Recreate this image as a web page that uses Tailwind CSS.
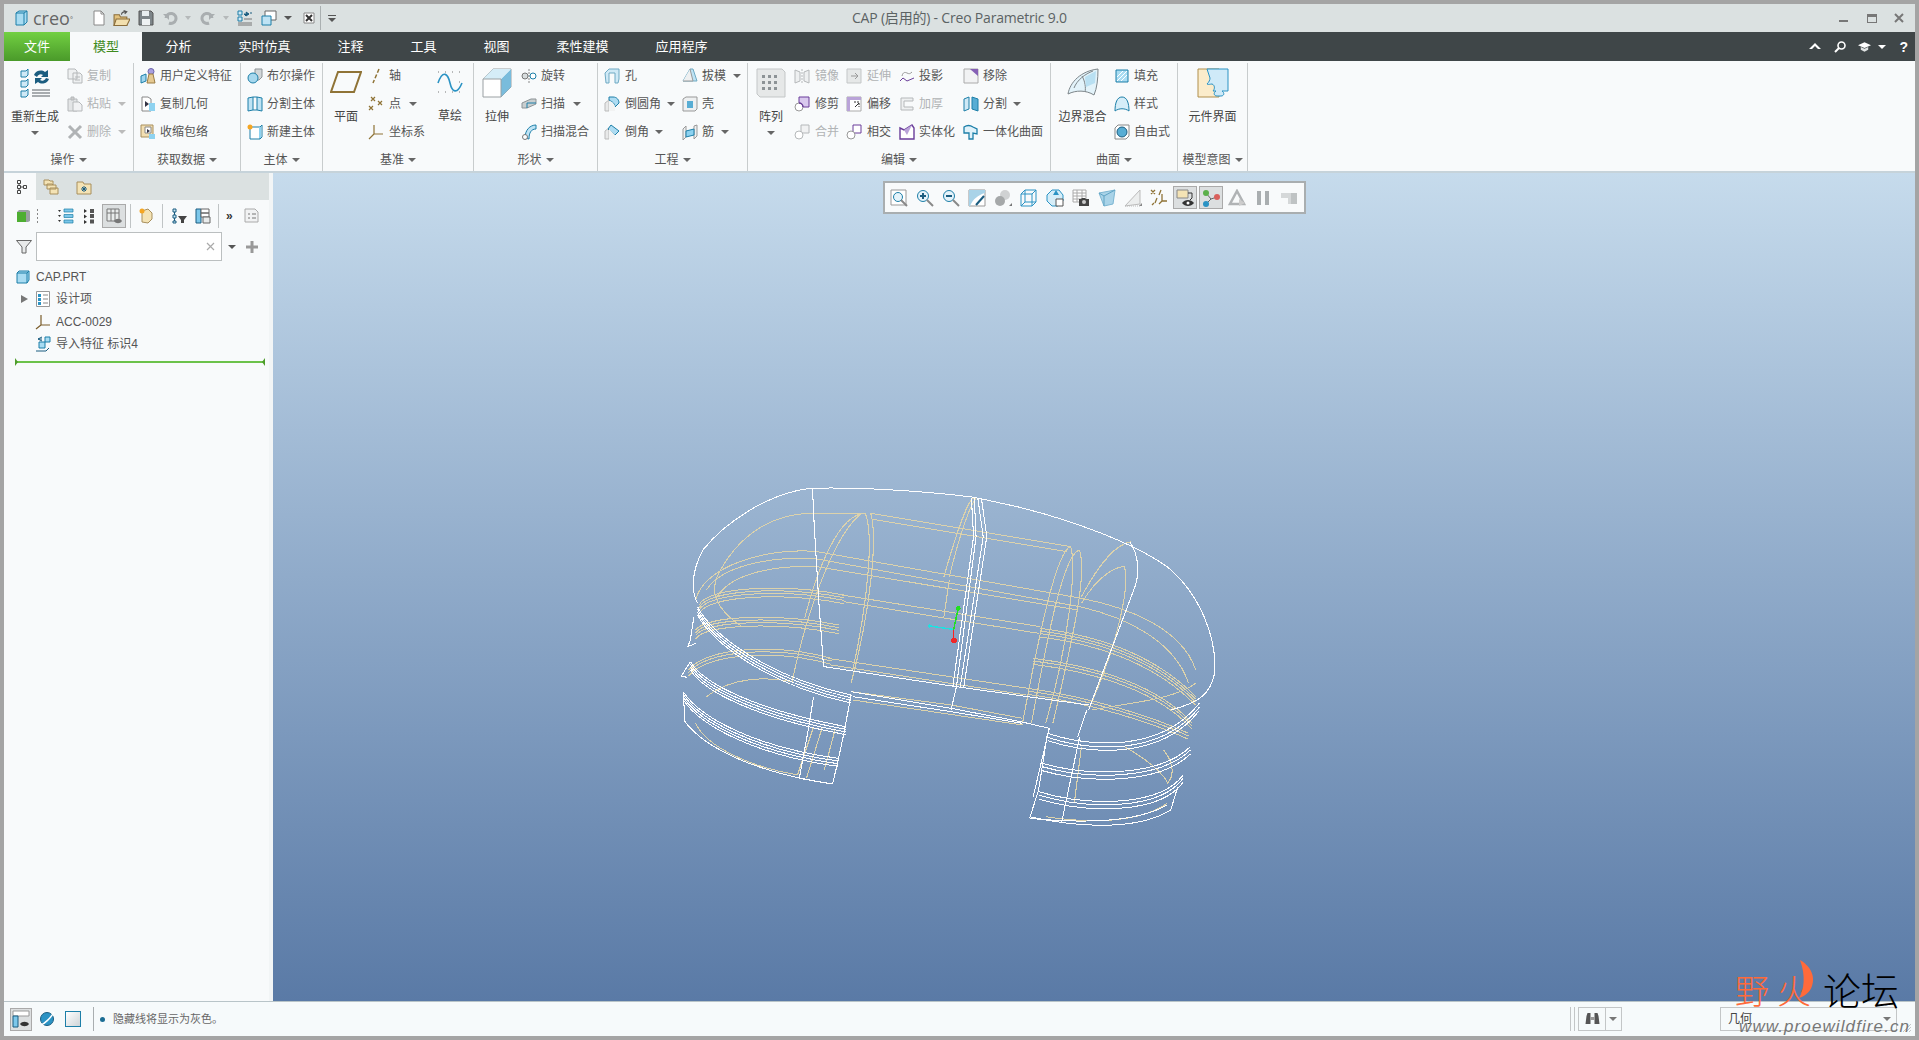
<!DOCTYPE html>
<html lang="zh-CN">
<head>
<meta charset="UTF-8" />
<title>CAP (启用的) - Creo Parametric 9.0</title>
<script src="https://cdn.jsdelivr.net/npm/@tailwindcss/browser@4"></script>
</head>
<body class="w-[1919px] h-[1040px] overflow-hidden bg-[#a4a4a4] p-1 text-xs text-[#555] font-['Liberation_Sans','Noto_Sans_CJK_SC',sans-serif]">
<div class="relative flex flex-col h-full">

  <!-- title bar -->
  <div class="flex items-center h-7 shrink-0 bg-[#dbe1e1]">
    <svg viewBox="0 0 16 16" class="w-[16px] h-[16px] ml-[9px]"><path d="M3 3l3-2h8v11l-3 3H3z" fill="#a9dcf2" stroke="#1d7fa8"/><path d="M11 15V3L14 1M11 3H3" fill="none" stroke="#1d7fa8"/></svg>
    <span class="ml-[4px] w-[50px] text-[18px] leading-none text-[#666] font-['Open_Sans']">creo<sup class="text-[7px]">°</sup></span>
    <svg viewBox="0 0 16 16" class="w-[16px] h-[18px] ml-[8px]"><path d="M3 1h7l3 3v11H3z" fill="#fff" stroke="#888"/><path d="M10 1v3h3" fill="none" stroke="#888"/></svg>
    <svg viewBox="0 0 16 16" class="w-[17px] h-[18px] ml-[6px]"><path d="M1 5h5l1 2h6v8H1z" fill="#e3c27e" stroke="#8a6d3b"/><path d="M3 9h13l-3 6H1z" fill="#f2dfae" stroke="#8a6d3b"/><path d="M8 5c0-2 2-3 4-3M10 1l3 1-2 2" fill="none" stroke="#555"/></svg>
    <svg viewBox="0 0 16 16" class="w-[16px] h-[16px] ml-[8px]"><path d="M1 1h12l2 2v12H1z" fill="#7d8589" stroke="#555"/><path d="M4 1h7v5H4z" fill="#e8eef0"/><path d="M4 9h8v6H4z" fill="#eef2f3"/></svg>
    <svg viewBox="0 0 16 16" class="w-[16px] h-[16px] ml-[8px]"><path d="M4 8a5 5 0 1 1 3 5" fill="none" stroke="#a9aeb0" stroke-width="3"/><path d="M1 4h6v6z" fill="#a9aeb0"/></svg>
    <span class="ml-[7px] w-0 h-0 border-x-[3px] border-x-transparent border-t-[4px] border-t-[#b5b9ba]"></span>
    <svg viewBox="0 0 16 16" class="w-[16px] h-[16px] ml-[9px]"><path d="M12 8a5 5 0 1 0-3 5" fill="none" stroke="#a9aeb0" stroke-width="3"/><path d="M15 4H9v6z" fill="#a9aeb0"/></svg>
    <span class="ml-[7px] w-0 h-0 border-x-[3px] border-x-transparent border-t-[4px] border-t-[#b5b9ba]"></span>
    <svg viewBox="0 0 16 16" class="w-[16px] h-[16px] ml-[8px]"><path d="M1 1h4v4H1zM1 7h4v4H1z" fill="#cfe9f6" stroke="#1d7fa8"/><path d="M7 9h8M1 13h14M1 15h14" stroke="#777"/><path d="M7 4h3l-1-2 3 2-3 2zM15 3h-2" fill="#1b5d80" stroke="#1b5d80"/></svg>
    <svg viewBox="0 0 16 16" class="w-[16px] h-[16px] ml-[8px]"><path d="M4 1h11v9H4z" fill="#fff" stroke="#666"/><path d="M1 6h9v9H1z" fill="#bfe3f4" stroke="#1d7fa8"/></svg>
    <span class="ml-[7px] w-0 h-0 border-x-[4px] border-x-transparent border-t-[4px] border-t-[#555]"></span>
    <svg viewBox="0 0 12 12" class="w-[12px] h-[12px] ml-[11px]"><path d="M1 1h10v10H1z" fill="#fff" stroke="#888"/><path d="M3 3l6 6M9 3l-6 6" stroke="#333" stroke-width="2"/></svg>
    <span class="ml-[5px] w-px h-[24px] bg-[#aab0b1]"></span>
    <span class="ml-[7px] flex flex-col items-center gap-[2px]"><span class="w-[8px] h-px bg-[#555]"></span><span class="w-0 h-0 border-x-[4px] border-x-transparent border-t-[4px] border-t-[#555]"></span></span>
    <span class="ml-[516px] text-[14px] text-[#5c6364] font-['Open_Sans','Noto_Sans_CJK_SC',sans-serif] tracking-[-0.2px] whitespace-nowrap">CAP (启用的) - Creo Parametric 9.0</span>
    <div class="ml-auto flex items-center mr-[11px]">
      <span class="w-[9px] h-[2px] mt-[5px] bg-[#777] mr-[19px]"></span>
      <span class="w-[10px] h-[9px] border border-t-[3px] border-[#777] mr-[17px]"></span>
      <svg viewBox="0 0 10 10" class="w-[10px] h-[10px]"><path d="M1 1l8 8M9 1l-8 8" stroke="#777" stroke-width="2"/></svg>
    </div>
  </div>

  <!-- tabs -->
  <div class="flex items-center h-[29px] shrink-0 bg-[#3f4648] text-[13px] text-white">
    <div class="flex items-center justify-center w-[66px] h-full bg-linear-to-b from-[#72d042] to-[#4a9a2a]">文件</div>
    <div class="flex items-center justify-center w-[72px] h-full bg-[#f8fafb] text-[#3f8b1e]">模型</div>
    <div class="px-[23.5px]">分析</div>
    <div class="px-[23.5px]">实时仿真</div>
    <div class="px-[23.5px]">注释</div>
    <div class="px-[23.5px]">工具</div>
    <div class="px-[23.5px]">视图</div>
    <div class="px-[23.5px]">柔性建模</div>
    <div class="px-[23.5px]">应用程序</div>
    <div class="ml-auto flex items-center mr-[7px]">
      <svg viewBox="0 0 12 8" class="w-[12px] h-[8px] mr-[13px] mb-[2px]"><path d="M0 7l6-6 6 6H9L6 4 3 7z" fill="#fff"/></svg>
      <svg viewBox="0 0 12 12" class="w-[12px] h-[12px] mr-[12px]"><circle cx="7.5" cy="4.5" r="3.5" fill="none" stroke="#fff" stroke-width="1.6"/><path d="M5 7l-4 4" stroke="#fff" stroke-width="2"/></svg>
      <svg viewBox="0 0 14 12" class="w-[13px] h-[12px] mr-[7px]"><path d="M7 1l7 3-7 3-7-3z" fill="#fff"/><path d="M3 6v3l4 2 4-2V6L7 8z" fill="#dfe3e3"/></svg>
      <span class="w-0 h-0 border-x-[4px] border-x-transparent border-t-[4px] border-t-white mr-[13px]"></span>
      <span class="text-[14px] font-bold leading-none font-['Liberation_Sans']">?</span>
    </div>
  </div>

  <!-- ribbon -->
  <div class="flex h-[112px] shrink-0 bg-[#f8fafb] border-b-2 border-[#c6d3da]">

    <!-- 操作 -->
    <div class="flex flex-col w-[129px] pt-px">
      <div class="flex h-[86px] pl-[7px]">
        <div class="flex flex-col items-center w-[48px]">
          <svg viewBox="0 0 30 30" class="w-[30px] h-[30px] mt-[6px]"><path d="M1 3h5l2-2v6l-2 2H1zM1 13h5l2-2v6l-2 2H1zM1 23h5l2-2v6l-2 2H1z" fill="#cfe9f6" stroke="#1d7fa8"/><path d="M12 22h18M12 25h18M12 28h18" stroke="#8d9396" stroke-width="1.5"/><path d="M14 7a7 7 0 0 1 11-3l3-2v7h-7l2-2a4 4 0 0 0-6 2zM29 11a7 7 0 0 1-11 3l-3 2V10h7l-2 2a4 4 0 0 0 6-2z" fill="#1b5d80"/></svg>
          <span class="mt-[11px] leading-4 text-[#444]">重新生成</span>
          <span class="mt-[6px] w-0 h-0 border-x-[4px] border-x-transparent border-t-[4px] border-t-[#666]"></span>
        </div>
        <div class="flex flex-col ml-[8px]">
          <div class="flex items-center h-7 gap-[4px] text-[#b0b3b5]">
            <svg viewBox="0 0 16 16" class="w-4 h-4"><path d="M1 1h7l2 2v8H1zM6 5h7l2 2v8H6z" fill="#eef0f1" stroke="#b5b8ba"/><path d="M8 9h5M8 12h5" stroke="#b5b8ba"/></svg>复制
          </div>
          <div class="flex items-center h-7 gap-[4px] text-[#b0b3b5]">
            <svg viewBox="0 0 16 16" class="w-4 h-4"><path d="M1 3h9v12H1z" fill="#e3e5e6" stroke="#b5b8ba"/><path d="M4 1h3v3H4z" fill="#ccc" stroke="#b5b8ba"/><path d="M6 6h6l3 3v6H6z" fill="#f1f2f3" stroke="#b5b8ba"/></svg>粘贴
            <span class="ml-[3px] w-0 h-0 border-x-[4px] border-x-transparent border-t-[4px] border-t-[#bbb]"></span>
          </div>
          <div class="flex items-center h-7 gap-[4px] text-[#b0b3b5]">
            <svg viewBox="0 0 16 16" class="w-4 h-4"><path d="M2 2l12 12M14 2L2 14" stroke="#b0b3b5" stroke-width="3"/></svg>删除
            <span class="ml-[3px] w-0 h-0 border-x-[4px] border-x-transparent border-t-[4px] border-t-[#bbb]"></span>
          </div>
        </div>
      </div>
      <div class="flex items-center justify-center gap-[4px] h-[23px]">操作<span class="w-0 h-0 border-x-[4px] border-x-transparent border-t-[4px] border-t-[#666]"></span></div>
    </div>
    <div class="w-px h-[108px] mt-[2px] bg-[#c8cccd]"></div>

    <!-- 获取数据 -->
    <div class="flex flex-col w-[106px] pt-px">
      <div class="flex flex-col h-[86px] pl-[6px]">
        <div class="flex items-center h-7 gap-[4px] whitespace-nowrap">
          <svg viewBox="0 0 16 16" class="w-4 h-4"><path d="M1 8l5-2v7l-5 2z" fill="#9fd5ee" stroke="#1d7fa8"/><circle cx="11" cy="3.5" r="3" fill="#a89fe0" stroke="#6b64a8"/><path d="M9 6h4l2 9H7z" fill="#e5c992" stroke="#9a7c45"/></svg>用户定义特征
        </div>
        <div class="flex items-center h-7 gap-[4px] whitespace-nowrap">
          <svg viewBox="0 0 16 16" class="w-4 h-4"><path d="M2 1h6l3 2v12H2z" fill="#fff" stroke="#888"/><path d="M5 5l4 3-4 3z" fill="#334"/><path d="M9 7h6v8H9z" fill="#8ed2f0"/></svg>复制几何
        </div>
        <div class="flex items-center h-7 gap-[4px] whitespace-nowrap">
          <svg viewBox="0 0 16 16" class="w-4 h-4"><path d="M1 1h12v12H1z" fill="#f3dfb2" stroke="#a88f5d"/><path d="M5 3h6v6H5z" fill="#fff" stroke="#888"/><path d="M7 5l3 2-3 2z" fill="#334"/><path d="M9 10h6v5H9z" fill="#8ed2f0"/></svg>收缩包络
        </div>
      </div>
      <div class="flex items-center justify-center gap-[4px] h-[23px]">获取数据<span class="w-0 h-0 border-x-[4px] border-x-transparent border-t-[4px] border-t-[#666]"></span></div>
    </div>
    <div class="w-px h-[108px] mt-[2px] bg-[#c8cccd]"></div>

    <!-- 主体 -->
    <div class="flex flex-col w-[81px] pt-px">
      <div class="flex flex-col h-[86px] pl-[6px]">
        <div class="flex items-center h-7 gap-[4px] whitespace-nowrap">
          <svg viewBox="0 0 16 16" class="w-4 h-4"><path d="M8 1h7v8l-3 3H8z" fill="#d2d7d9" stroke="#8d9396"/><circle cx="6" cy="10" r="5" fill="#a7d8ee" stroke="#1d7fa8"/></svg>布尔操作
        </div>
        <div class="flex items-center h-7 gap-[4px] whitespace-nowrap">
          <svg viewBox="0 0 16 16" class="w-4 h-4"><path d="M1 2l5-1v13l-5 1zM10 1l5 1v13l-5-1z" fill="#bfe3f4" stroke="#1d7fa8"/><path d="M6 1h4M6 14h4" stroke="#1d7fa8"/></svg>分割主体
        </div>
        <div class="flex items-center h-7 gap-[4px] whitespace-nowrap">
          <svg viewBox="0 0 16 16" class="w-4 h-4"><path d="M3 3h10l2-2v12l-2 2H3z" fill="#fff" stroke="#1d7fa8"/><path d="M13 3v12" stroke="#1d7fa8"/><path d="M12 3h2v11h-2z" fill="#8ed2f0"/><circle cx="3" cy="3" r="2.5" fill="#f5a623"/></svg>新建主体
        </div>
      </div>
      <div class="flex items-center justify-center gap-[4px] h-[23px]">主体<span class="w-0 h-0 border-x-[4px] border-x-transparent border-t-[4px] border-t-[#666]"></span></div>
    </div>
    <div class="w-px h-[108px] mt-[2px] bg-[#c8cccd]"></div>

    <!-- 基准 -->
    <div class="flex flex-col w-[150px] pt-px">
      <div class="flex h-[86px] pl-[7px]">
        <div class="flex flex-col items-center w-[32px]">
          <svg viewBox="0 0 32 22" class="w-[32px] h-[22px] mt-[9px]"><path d="M8 1h23l-7 20H1z" fill="none" stroke="#8f7336" stroke-width="2"/></svg>
          <span class="mt-[16px] leading-4 text-[#444]">平面</span>
        </div>
        <div class="flex flex-col ml-[6px] w-[68px]">
          <div class="flex items-center h-7 gap-[5px]">
            <svg viewBox="0 0 16 16" class="w-4 h-4"><path d="M11 1l-6 14" stroke="#8f7336" stroke-dasharray="4 2" stroke-width="1.5"/></svg>轴
          </div>
          <div class="flex items-center h-7 gap-[5px]">
            <svg viewBox="0 0 16 16" class="w-4 h-4"><path d="M3 1l4 4M7 1L3 5M10 5l4 4M14 5l-4 4M1 10l4 4M5 10l-4 4" stroke="#8f7336" stroke-width="1.2"/></svg>点
            <span class="ml-[3px] w-0 h-0 border-x-[4px] border-x-transparent border-t-[4px] border-t-[#666]"></span>
          </div>
          <div class="flex items-center h-7 gap-[5px] whitespace-nowrap">
            <svg viewBox="0 0 16 16" class="w-4 h-4"><path d="M6 1v9l9 0M6 10l-5 5" fill="none" stroke="#8f7336" stroke-width="1.2"/></svg>坐标系
          </div>
        </div>
        <div class="flex flex-col items-center w-[28px]">
          <svg viewBox="0 0 28 26" class="w-[28px] h-[26px] mt-[7px]"><path d="M2 3h1M9 3h1M16 3h1M23 3h1M2 13h1M23 13h1M2 23h1M9 23h1M16 23h1M23 23h1" stroke="#777"/><path d="M2 14c5-14 10-9 12 0s7 12 12 0" fill="none" stroke="#2b93c4" stroke-width="1.6"/></svg>
          <span class="mt-[13px] leading-4 text-[#444]">草绘</span>
        </div>
      </div>
      <div class="flex items-center justify-center gap-[4px] h-[23px]">基准<span class="w-0 h-0 border-x-[4px] border-x-transparent border-t-[4px] border-t-[#666]"></span></div>
    </div>
    <div class="w-px h-[108px] mt-[2px] bg-[#c8cccd]"></div>

    <!-- 形状 -->
    <div class="flex flex-col w-[123px] pt-px">
      <div class="flex h-[86px] pl-[8px]">
        <div class="flex flex-col items-center w-[30px]">
          <svg viewBox="0 0 30 30" class="w-[30px] h-[30px] mt-[6px]"><path d="M1 11L11 1h18v18L19 29H1z" fill="#fff" stroke="#9aa0a3"/><path d="M19 11L29 1v18L19 29z" fill="#79bcdc"/><path d="M1 11L11 1h18L19 11z" fill="#d5edf8"/><path d="M1 11h18v18" fill="none" stroke="#9aa0a3"/></svg>
          <span class="mt-[11px] leading-4 text-[#444]">拉伸</span>
        </div>
        <div class="flex flex-col ml-[9px]">
          <div class="flex items-center h-7 gap-[4px]">
            <svg viewBox="0 0 16 16" class="w-4 h-4"><path d="M8 1v14" stroke="#888" stroke-dasharray="2 1"/><circle cx="4" cy="8" r="3" fill="#d7dcdd" stroke="#777"/><circle cx="12" cy="8" r="3" fill="#fff" stroke="#1d7fa8"/></svg>旋转
          </div>
          <div class="flex items-center h-7 gap-[4px]">
            <svg viewBox="0 0 16 16" class="w-4 h-4"><path d="M1 7l9-4h5v5l-9 4H1z" fill="#c9cecf" stroke="#8d9396"/><path d="M6 12V7h9" fill="none" stroke="#1d7fa8"/></svg>扫描
            <span class="ml-[4px] w-0 h-0 border-x-[4px] border-x-transparent border-t-[4px] border-t-[#666]"></span>
          </div>
          <div class="flex items-center h-7 gap-[4px] whitespace-nowrap">
            <svg viewBox="0 0 16 16" class="w-4 h-4"><path d="M4 14c0-8 5-13 11-13v4C10 5 8 9 8 15z" fill="#bfe3f4" stroke="#1d7fa8"/><circle cx="4" cy="13" r="2.5" fill="#fff" stroke="#777"/></svg>扫描混合
          </div>
        </div>
      </div>
      <div class="flex items-center justify-center gap-[4px] h-[23px]">形状<span class="w-0 h-0 border-x-[4px] border-x-transparent border-t-[4px] border-t-[#666]"></span></div>
    </div>
    <div class="w-px h-[108px] mt-[2px] bg-[#c8cccd]"></div>

    <!-- 工程 -->
    <div class="flex flex-col w-[149px] pt-px">
      <div class="flex h-[86px] pl-[6px]">
        <div class="flex flex-col w-[78px]">
          <div class="flex items-center h-7 gap-[5px]">
            <svg viewBox="0 0 16 16" class="w-4 h-4"><path d="M1 5l4-4h10v10l-1 4h-3V5H5v10H2z" fill="#cfe9f6" stroke="#6ea9c3"/></svg>孔
          </div>
          <div class="flex items-center h-7 gap-[5px]">
            <svg viewBox="0 0 16 16" class="w-4 h-4"><path d="M1 7l4-3v11H1z" fill="#e8e9e9" stroke="#bbb"/><path d="M5 1h4c4 0 6 3 6 6l-4 4c0-3-2-5-6-7z" fill="#aedcf2" stroke="#1d7fa8"/><path d="M5 5c4 1 6 4 6 6v4H5z" fill="#f2f3f3"/></svg>倒圆角
            <span class="ml-[1px] w-0 h-0 border-x-[4px] border-x-transparent border-t-[4px] border-t-[#666]"></span>
          </div>
          <div class="flex items-center h-7 gap-[5px]">
            <svg viewBox="0 0 16 16" class="w-4 h-4"><path d="M1 7l4-3v11H1z" fill="#e8e9e9" stroke="#bbb"/><path d="M7 1l8 6-4 4-7-6z" fill="#aedcf2" stroke="#1d7fa8"/><path d="M5 5l6 6v4H5z" fill="#f2f3f3"/></svg>倒角
            <span class="ml-[1px] w-0 h-0 border-x-[4px] border-x-transparent border-t-[4px] border-t-[#666]"></span>
          </div>
        </div>
        <div class="flex flex-col">
          <div class="flex items-center h-7 gap-[4px]">
            <svg viewBox="0 0 16 16" class="w-4 h-4"><path d="M1 13L8 1h3l4 12z" fill="#bfe3f4" stroke="#6ea9c3"/><path d="M8 1l3 12H1" fill="#eef0f1" stroke="#999"/></svg>拔模
            <span class="ml-[3px] w-0 h-0 border-x-[4px] border-x-transparent border-t-[4px] border-t-[#666]"></span>
          </div>
          <div class="flex items-center h-7 gap-[4px]">
            <svg viewBox="0 0 16 16" class="w-4 h-4"><path d="M1 3l3-2h11v12l-2 2H1z" fill="#eef0f1" stroke="#999"/><path d="M5 5h6v7H5z" fill="#58add4"/></svg>壳
          </div>
          <div class="flex items-center h-7 gap-[4px]">
            <svg viewBox="0 0 16 16" class="w-4 h-4"><path d="M1 5l3-3v11l-3 3zM12 2l3-1v11l-3 3z" fill="#eef0f1" stroke="#999"/><path d="M4 7l8-2v6l-8 2z" fill="#8ed2f0" stroke="#1d7fa8"/></svg>筋
            <span class="ml-[3px] w-0 h-0 border-x-[4px] border-x-transparent border-t-[4px] border-t-[#666]"></span>
          </div>
        </div>
      </div>
      <div class="flex items-center justify-center gap-[4px] h-[23px]">工程<span class="w-0 h-0 border-x-[4px] border-x-transparent border-t-[4px] border-t-[#666]"></span></div>
    </div>
    <div class="w-px h-[108px] mt-[2px] bg-[#c8cccd]"></div>

    <!-- 编辑 -->
    <div class="flex flex-col w-[302px] pt-px">
      <div class="flex h-[86px] pl-[8px]">
        <div class="flex flex-col items-center w-[30px]">
          <svg viewBox="0 0 30 30" class="w-[30px] h-[30px] mt-[6px]"><path d="M1 1h25l3 3v25H4l-3-3z" fill="#e6e8e8" stroke="#c3c6c7"/><path d="M6 7h3v3H6zM12 7h3v3h-3zM18 7h3v3h-3zM6 13h3v3H6zM12 13h3v3h-3zM18 13h3v3h-3zM6 19h3v3H6zM12 19h3v3h-3zM18 19h3v3h-3z" fill="#8d9396"/></svg>
          <span class="mt-[11px] leading-4 text-[#444]">阵列</span>
          <span class="mt-[6px] w-0 h-0 border-x-[4px] border-x-transparent border-t-[4px] border-t-[#666]"></span>
        </div>
        <div class="flex flex-col ml-[8px] w-[52px] text-[#b0b3b5]">
          <div class="flex items-center h-7 gap-[5px]">
            <svg viewBox="0 0 16 16" class="w-4 h-4"><path d="M1 2l5 2v9l-5 2zM15 2l-5 2v9l5 2z" fill="#eef0f1" stroke="#b5b8ba"/><path d="M8 1v14" stroke="#b5b8ba" stroke-dasharray="2 1"/></svg>镜像
          </div>
          <div class="flex items-center h-7 gap-[5px] text-[#555]">
            <svg viewBox="0 0 16 16" class="w-4 h-4"><path d="M5 1h10v10H5z" fill="#d9c9ee" stroke="#6a3d9a"/><circle cx="5" cy="11" r="4" fill="#fff" stroke="#999"/><path d="M5 7a4 4 0 0 1 4 4" fill="none" stroke="#6a3d9a" stroke-width="1.5"/></svg>修剪
          </div>
          <div class="flex items-center h-7 gap-[5px]">
            <svg viewBox="0 0 16 16" class="w-4 h-4"><path d="M7 1h8v8H7z" fill="#f1f2f3" stroke="#b5b8ba"/><circle cx="5" cy="11" r="4" fill="#fff" stroke="#b5b8ba"/></svg>合并
          </div>
        </div>
        <div class="flex flex-col w-[53px] text-[#b0b3b5]">
          <div class="flex items-center h-7 gap-[5px]">
            <svg viewBox="0 0 16 16" class="w-4 h-4"><path d="M1 1h14v14H1z" fill="#e6e8e8" stroke="#c3c6c7"/><path d="M5 8h6M9 5l3 3-3 3" fill="none" stroke="#999"/></svg>延伸
          </div>
          <div class="flex items-center h-7 gap-[5px] text-[#555]">
            <svg viewBox="0 0 16 16" class="w-4 h-4"><path d="M1 1h14v14H1z" fill="#fff" stroke="#aaa"/><path d="M1 1h14v3H4v11H1z" fill="#b9a3d8"/><path d="M8 6h5v5" fill="none" stroke="#333" stroke-dasharray="2 1"/><path d="M9 11l4-4" stroke="#333"/></svg>偏移
          </div>
          <div class="flex items-center h-7 gap-[5px] text-[#555]">
            <svg viewBox="0 0 16 16" class="w-4 h-4"><path d="M7 1h8v8H7z" fill="#fff" stroke="#6a3d9a"/><circle cx="5" cy="11" r="4" fill="#fff" stroke="#999"/></svg>相交
          </div>
        </div>
        <div class="flex flex-col w-[64px]">
          <div class="flex items-center h-7 gap-[4px]">
            <svg viewBox="0 0 16 16" class="w-4 h-4"><path d="M1 13l3-3 4 3 7-3" fill="none" stroke="#6a3d9a"/><path d="M3 8c1-4 3-4 5-3s3 1 5-1" fill="none" stroke="#999"/></svg>投影
          </div>
          <div class="flex items-center h-7 gap-[4px] text-[#b0b3b5]">
            <svg viewBox="0 0 16 16" class="w-4 h-4"><path d="M2 2h12v3H5v6h9v3H2z" fill="#eef0f1" stroke="#b5b8ba"/></svg>加厚
          </div>
          <div class="flex items-center h-7 gap-[4px] whitespace-nowrap">
            <svg viewBox="0 0 16 16" class="w-4 h-4"><path d="M1 4l4 2 8-5 2 3v11H1z" fill="#fff" stroke="#6a3d9a" stroke-width="1.4"/><path d="M5 6l3 5 5-10" fill="#b9a3d8"/></svg>实体化
          </div>
        </div>
        <div class="flex flex-col">
          <div class="flex items-center h-7 gap-[4px]">
            <svg viewBox="0 0 16 16" class="w-4 h-4"><path d="M1 1h14v14H1z" fill="#f1f2f3" stroke="#aaa"/><path d="M7 1h8v7z" fill="#8560b5"/></svg>移除
          </div>
          <div class="flex items-center h-7 gap-[4px]">
            <svg viewBox="0 0 16 16" class="w-4 h-4"><path d="M1 3l5-2v12l-5 2z" fill="#cfe9f6" stroke="#1d7fa8"/><path d="M9 1l6 2v12l-6-2z" fill="#58add4" stroke="#1d7fa8"/></svg>分割
            <span class="ml-[2px] w-0 h-0 border-x-[4px] border-x-transparent border-t-[4px] border-t-[#666]"></span>
          </div>
          <div class="flex items-center h-7 gap-[4px] whitespace-nowrap">
            <svg viewBox="0 0 16 16" class="w-4 h-4"><path d="M1 3c3-2 6-2 9 0l4 2v5l-4-1v6H6V9H1z" fill="#e0f2fa" stroke="#1d7fa8" stroke-width="1.3"/></svg>一体化曲面
          </div>
        </div>
      </div>
      <div class="flex items-center justify-center gap-[4px] h-[23px]">编辑<span class="w-0 h-0 border-x-[4px] border-x-transparent border-t-[4px] border-t-[#666]"></span></div>
    </div>
    <div class="w-px h-[108px] mt-[2px] bg-[#c8cccd]"></div>

    <!-- 曲面 -->
    <div class="flex flex-col w-[126px] pt-px">
      <div class="flex h-[86px] pl-[7px]">
        <div class="flex flex-col items-center w-[49px]">
          <svg viewBox="0 0 32 28" class="w-[32px] h-[28px] mt-[6px]"><path d="M1 26C3 14 14 3 31 1c0 10-1 19-4 26-8-5-18-5-26-1z" fill="#e3f3fa" stroke="#7d8589"/><path d="M7 20C10 12 18 6 26 3M15 8c3 5 4 12 3 16" fill="none" stroke="#7d8589"/><path d="M18 9l11-6-1 12-9 4z" fill="#b9e0f2"/></svg>
          <span class="mt-[13px] leading-4 text-[#444] whitespace-nowrap">边界混合</span>
        </div>
        <div class="flex flex-col ml-[7px]">
          <div class="flex items-center h-7 gap-[4px]">
            <svg viewBox="0 0 16 16" class="w-4 h-4"><path d="M2 2h12v12H2z" fill="#a9dcf2" stroke="#1d7fa8"/><path d="M3 13L13 3M3 9l6-6M7 13l6-6" stroke="#fff"/></svg>填充
          </div>
          <div class="flex items-center h-7 gap-[4px]">
            <svg viewBox="0 0 16 16" class="w-4 h-4"><path d="M1 15C1 7 3 1 8 1s7 6 7 14c-4-3-10-3-14 0z" fill="#d5edf8" stroke="#1d7fa8"/></svg>样式
          </div>
          <div class="flex items-center h-7 gap-[4px]">
            <svg viewBox="0 0 16 16" class="w-4 h-4"><path d="M1 4l3-3h11v11l-3 3H1z" fill="#fff" stroke="#888"/><circle cx="8" cy="8" r="5" fill="#58add4" stroke="#1b5d80"/></svg>自由式
          </div>
        </div>
      </div>
      <div class="flex items-center justify-center gap-[4px] h-[23px]">曲面<span class="w-0 h-0 border-x-[4px] border-x-transparent border-t-[4px] border-t-[#666]"></span></div>
    </div>
    <div class="w-px h-[108px] mt-[2px] bg-[#c8cccd]"></div>

    <!-- 模型意图 -->
    <div class="flex flex-col w-[69px] pt-px">
      <div class="flex flex-col items-center h-[86px]">
        <svg viewBox="0 0 32 30" class="w-[32px] h-[30px] mt-[6px]"><path d="M1 1h21v28H1z" fill="#fbeccb" stroke="#b08f4c"/><path d="M10 1h21v22h-6c3 2 2 5-1 5h-4c-3 0-4-3-1-5h-3c2-2 2-6-1-7-2 0-3 1-5 0 2-2 3-4 3-6z" fill="#cfeaf8" stroke="#2b93c4"/></svg>
        <span class="mt-[11px] leading-4 text-[#444] whitespace-nowrap">元件界面</span>
      </div>
      <div class="flex items-center justify-center gap-[4px] h-[23px] whitespace-nowrap">模型意图<span class="w-0 h-0 border-x-[4px] border-x-transparent border-t-[4px] border-t-[#666]"></span></div>
    </div>
    <div class="w-px h-[108px] mt-[2px] bg-[#c8cccd]"></div>
  </div>

  <!-- main area -->
  <div class="flex flex-1 min-h-0">

    <!-- left panel -->
    <div class="flex flex-col w-[265px] shrink-0 bg-[#f8fafb]">
      <div class="flex h-[27px] shrink-0">
        <div class="flex items-center w-[32px] pl-[12px]">
          <svg viewBox="0 0 12 16" class="w-[12px] h-[16px]"><path d="M1.5 1.5h3v3h-3zM1.5 6.5h3v3h-3zM1.5 11.5h3v3h-3zM7.5 6.5h3v3h-3zM3 4.5v2M3 9.5v2M4.5 8h3" fill="none" stroke="#444"/></svg>
        </div>
        <div class="flex flex-1 items-center bg-[#dbe1e1]">
          <svg viewBox="0 0 16 16" class="w-[16px] h-[16px] ml-[7px]"><path d="M1 1h5l1 1h3v4H1zM4 5h5l1 1h3v4H4zM7 9h8v6H7z" fill="#f4e3b5" stroke="#a88f5d"/></svg>
          <svg viewBox="0 0 16 16" class="w-[16px] h-[16px] ml-[17px]"><path d="M1 3h6l1 2h7v10H1z" fill="#f4e3b5" stroke="#a88f5d"/><path d="M8 7v6M5 10h6M6 8l4 4M10 8l-4 4" stroke="#1b5d80"/></svg>
        </div>
      </div>

      <div class="flex items-center h-[25px] mt-[3px] pl-[12px] shrink-0">
        <svg viewBox="0 0 14 14" class="w-[14px] h-[14px]"><path d="M3 1h9l2 1v10l-2 1H1V3z" fill="#9aa0a3"/><path d="M1 3h9v10H1z" fill="#4eae32"/></svg>
        <span class="ml-[7px] flex flex-col gap-[2px]"><span class="w-px h-[2px] bg-[#888]"></span><span class="w-px h-[2px] bg-[#888]"></span><span class="w-px h-[2px] bg-[#888]"></span><span class="w-px h-[2px] bg-[#888]"></span></span>
        <svg viewBox="0 0 16 16" class="w-[16px] h-[16px] ml-[20px]"><path d="M0 2h3L1.500 4zM0 7h3L1.500 9zM0 12h3l-1.500 2z" fill="#333"/><path d="M6 1h9v3H6zM6 6.500h9v3H6zM6 12h9v3H6z" fill="#7cc7ea" stroke="#1d7fa8" stroke-width=".7"/></svg>
        <svg viewBox="0 0 10 16" class="w-[10px] h-[16px] ml-[10px]"><path d="M0 1l3 2-3 2zM0 6.500l3 2-3 2zM0 12l3 2-3 2z" fill="#333"/><path d="M6 1h4v4H6zM6 6h4v4H6zM6 11.500h4v4H6z" fill="#555"/></svg>
        <span class="flex items-center justify-center w-[24px] h-[24px] ml-[8px] bg-[#dcdfe0] border border-[#aaa]">
          <svg viewBox="0 0 16 16" class="w-[16px] h-[16px]"><path d="M1 1h12v12H1zM1 5h12M5 1v12M9 1v12" fill="#e9ecec" stroke="#777"/><path d="M8 13c2-3 6-3 8 0-2 3-6 3-8 0z" fill="#777"/></svg>
        </span>
        <span class="w-px h-[24px] ml-[4px] bg-[#c0c4c5]"></span>
        <svg viewBox="0 0 14 16" class="w-[14px] h-[16px] ml-[8px]"><path d="M3 3l6-2 4 4v6l-4 4-6-1z" fill="#f4e3b5" stroke="#a88f5d"/><circle cx="3" cy="3" r="2.500" fill="#f5a623"/></svg>
        <span class="w-px h-[24px] ml-[9px] bg-[#c0c4c5]"></span>
        <svg viewBox="0 0 16 16" class="w-[16px] h-[16px] ml-[9px]"><path d="M1 1h3v3H1zM1 7h3v3H1zM1 13h3v2H1zM2.500 4v3M2.500 10v3" fill="#cfe9f6" stroke="#1b5d80"/><path d="M6 8h9l-3 4v3H9v-3z" fill="#444"/></svg>
        <svg viewBox="0 0 16 16" class="w-[16px] h-[16px] ml-[7px]"><path d="M1 1h5v14H1z" fill="#7cc7ea" stroke="#1b5d80"/><path d="M6 1h8v4H6zM6 5h8v4H6z" fill="#fff" stroke="#666"/><path d="M8 9h7v6H8z" fill="#e9ecec" stroke="#666"/></svg>
        <span class="w-px h-[24px] ml-[7px] bg-[#c0c4c5]"></span>
        <span class="ml-[7px] text-[12px] font-bold leading-none text-[#333]">»</span>
        <svg viewBox="0 0 16 16" class="w-[16px] h-[16px] ml-[11px]"><path d="M1 1h10l3 3v10H1z" fill="#f1f2f3" stroke="#aaa"/><path d="M4 6h2M8 6h4M4 10h2M8 10h4" stroke="#777"/></svg>
      </div>

      <div class="flex items-center h-[29px] mt-[4px] pl-[12px] shrink-0">
        <svg viewBox="0 0 16 14" class="w-[16px] h-[14px]"><path d="M.5.5h15L10 7v6l-4 0V7z" fill="#e8eaea" stroke="#666"/></svg>
        <div class="flex items-center justify-end w-[186px] h-[29px] ml-[4px] pr-[6px] bg-white border border-[#bbbfc0]">
          <svg viewBox="0 0 9 9" class="w-[9px] h-[9px]"><path d="M1 1l7 7M8 1L1 8" stroke="#aaa" stroke-width="1.200"/></svg>
        </div>
        <span class="ml-[6px] w-0 h-0 border-x-[4px] border-x-transparent border-t-[4px] border-t-[#555]"></span>
        <svg viewBox="0 0 12 12" class="w-[12px] h-[12px] ml-[10px]"><path d="M4.500 0h3v4.500H12v3H7.500V12h-3V7.500H0v-3h4.500z" fill="#999"/></svg>
      </div>

      <div class="flex flex-col mt-[5px] text-[#555]">
        <div class="flex items-center h-[22px] pl-[12px]">
          <svg viewBox="0 0 14 14" class="w-[14px] h-[14px] mr-[6px]"><path d="M1 3l2-2h10v9l-2 3H1z" fill="#a9dcf2" stroke="#1d7fa8"/><path d="M11 13V3H1M11 3l2-2" fill="none" stroke="#1d7fa8"/></svg>CAP.PRT
        </div>
        <div class="flex items-center h-[22px] pl-[17px]">
          <span class="w-0 h-0 border-y-[4px] border-y-transparent border-l-[7px] border-l-[#777]"></span>
          <svg viewBox="0 0 14 16" class="w-[14px] h-[16px] ml-[8px] mr-[6px]"><path d="M.5.500h13v15H.500z" fill="#fff" stroke="#999"/><path d="M2 3h3v3H2zM2 7h3v3H2zM2 11h3v3H2z" fill="#2b93c4"/><path d="M7 4h5M7 8h5M7 12h5" stroke="#888"/></svg>设计项
        </div>
        <div class="flex items-center h-[23px] pl-[31px]">
          <svg viewBox="0 0 16 16" class="w-[16px] h-[16px] mr-[5px]"><path d="M6 1v10l9 0M6 11l-5 4" fill="none" stroke="#7a5c2a" stroke-width="1.200"/></svg>ACC-0029
        </div>
        <div class="flex items-center h-[22px] pl-[31px]">
          <svg viewBox="0 0 16 16" class="w-[16px] h-[16px] mr-[5px]"><path d="M10 1h5v5h-5zM4 6h6v6H4z" fill="#a9dcf2" stroke="#1d7fa8"/><path d="M1 15h10l3-3M7 1L3 3l4 2M3 3h4" fill="none" stroke="#1b5d80"/></svg>导入特征 标识4
        </div>
        <div class="relative h-[2px] mt-[6px] ml-[11px] mr-[4px] bg-[#6cc24a]">
          <span class="absolute left-0 -top-[3px] w-0 h-0 border-y-[4px] border-y-transparent border-l-[3px] border-l-[#4e9d2b]"></span>
          <span class="absolute right-0 -top-[3px] w-0 h-0 border-y-[4px] border-y-transparent border-r-[3px] border-r-[#4e9d2b]"></span>
        </div>
      </div>
    </div>

    <div class="w-[4px] shrink-0 bg-[#f2f5f6]"></div>

    <!-- graphics area -->
    <div class="relative flex-1 bg-linear-to-b from-[#c6dbec] to-[#5a7aa6]">

      <!-- in-graphics toolbar -->
      <div class="absolute left-[610px] top-[8px] flex items-center w-[423px] h-[33px] pl-px bg-[#f8fafb] border-2 border-[#a9aeb0]">
        <span class="flex items-center justify-center w-[26px]"><svg viewBox="0 0 18 18" class="w-[18px] h-[18px]"><path d="M1 1h15v15H1z" fill="#fff" stroke="#999"/><circle cx="8" cy="8" r="4.500" fill="#e5f3fa" stroke="#1d7fa8"/><path d="M11 11l6 6" stroke="#888" stroke-width="2"/></svg></span>
        <span class="flex items-center justify-center w-[26px]"><svg viewBox="0 0 18 18" class="w-[18px] h-[18px]"><circle cx="7" cy="7" r="5.500" fill="#e5f3fa" stroke="#1d7fa8"/><path d="M4 7h6M7 4v6" stroke="#1b5d80" stroke-width="2"/><path d="M11 11l6 6" stroke="#888" stroke-width="2"/></svg></span>
        <span class="flex items-center justify-center w-[26px]"><svg viewBox="0 0 18 18" class="w-[18px] h-[18px]"><circle cx="7" cy="7" r="5.500" fill="#e5f3fa" stroke="#1d7fa8"/><path d="M4 7h6" stroke="#1b5d80" stroke-width="2"/><path d="M11 11l6 6" stroke="#888" stroke-width="2"/></svg></span>
        <span class="flex items-center justify-center w-[26px]"><svg viewBox="0 0 18 18" class="w-[18px] h-[18px]"><path d="M1 1h16v16H1z" fill="#fff" stroke="#999"/><path d="M1 1h16v3C10 6 5 10 2 17H1z" fill="#a9d3e8"/><path d="M8 16l8-9" stroke="#1b5d80" stroke-width="2"/></svg></span>
        <span class="flex items-center justify-center w-[26px]"><svg viewBox="0 0 18 18" class="w-[18px] h-[18px]"><circle cx="11" cy="6" r="5" fill="#d0d2d3"/><circle cx="6" cy="12" r="5" fill="#a5a8a9"/><path d="M15 17h3v-3z" fill="#777"/></svg></span>
        <span class="flex items-center justify-center w-[26px]"><svg viewBox="0 0 18 18" class="w-[18px] h-[18px]"><path d="M1 5h11v12H1zM5 1h11v12H5zM1 5l4-4M12 5l4-4M1 17l4-4M12 17l4-4" fill="none" stroke="#2b93c4"/></svg></span>
        <span class="flex items-center justify-center w-[26px]"><svg viewBox="0 0 18 18" class="w-[18px] h-[18px]"><path d="M1 6l5-5h7l4 5v6l-5 5H6l-5-5z" fill="#d5edf8" stroke="#2b93c4"/><path d="M10 1l3 5h-6z" fill="#2b93c4"/><path d="M10 10h7v7h-7z" fill="#fff" stroke="#555"/></svg></span>
        <span class="flex items-center justify-center w-[26px]"><svg viewBox="0 0 18 18" class="w-[18px] h-[18px]"><path d="M1 1h13v12H1zM1 4h13M1 7h13M1 10h13M5 1v12M10 1v12" fill="#fff" stroke="#aaa"/><path d="M7 10h2l1-1h3l1 1h3v7H7z" fill="#444"/><circle cx="12" cy="13" r="2" fill="#ccc"/></svg></span>
        <span class="flex items-center justify-center w-[26px]"><svg viewBox="0 0 18 18" class="w-[18px] h-[18px]"><path d="M1 4l16-3-2 14-9 2z" fill="#a9d3e8" stroke="#7cb6d2"/><path d="M6 7l11-6M6 7l0 10M6 7L1 4" stroke="#5fa3c4" fill="none"/></svg></span>
        <span class="flex items-center justify-center w-[26px]"><svg viewBox="0 0 18 18" class="w-[18px] h-[18px]"><path d="M1 17L16 1v14z" fill="#eceeee" stroke="#bbb"/><path d="M1 17h15" stroke="#bbb" stroke-dasharray="1 1"/><path d="M15 17h3v-3z" fill="#888"/></svg></span>
        <span class="flex items-center justify-center w-[26px]"><svg viewBox="0 0 18 18" class="w-[18px] h-[18px]"><path d="M1 1l4 4M5 1L1 5M11 1l-2 5M7 9l-2 5M12 5v7h5M12 12l-3 3M2 16l2-2" stroke="#8f7336" stroke-width="1.300" fill="none"/></svg></span>
        <span class="flex items-center justify-center w-[24px] h-[23px] mx-px bg-[#dcdfe0] border border-[#aaa]"><svg viewBox="0 0 18 18" class="w-[18px] h-[18px]"><path d="M1 1h11v8H1z" fill="#f4e3b5" stroke="#888"/><path d="M12 4h4v5l-2 2" fill="none" stroke="#333"/><path d="M6 14c3-4 9-4 12 0-3 4-9 4-12 0z" fill="#333"/><circle cx="12" cy="14" r="1.500" fill="#fff"/></svg></span>
        <span class="flex items-center justify-center w-[24px] h-[23px] mx-px bg-[#dcdfe0] border border-[#aaa]"><svg viewBox="0 0 18 18" class="w-[18px] h-[18px]"><path d="M4 4l5 6 6-2M9 10l-5 5" stroke="#666" fill="none"/><circle cx="4" cy="4" r="3" fill="#5bb04a"/><circle cx="15" cy="8" r="3" fill="#d9605c"/><circle cx="4" cy="15" r="3" fill="#2b93c4"/></svg></span>
        <span class="flex items-center justify-center w-[26px]"><svg viewBox="0 0 18 18" class="w-[18px] h-[18px]"><path d="M9 2l7 13H2z" fill="none" stroke="#b0b3b5" stroke-width="2.500"/><path d="M11 10l6 4-6 3z" fill="#ccc"/></svg></span>
        <span class="flex items-center justify-center w-[26px]"><svg viewBox="0 0 18 18" class="w-[18px] h-[18px]"><path d="M3 2h4v14H3zM11 2h4v14h-4z" fill="#a9aeb0"/></svg></span>
        <span class="flex items-center justify-center w-[26px]"><svg viewBox="0 0 18 18" class="w-[18px] h-[18px]"><path d="M1 4h16v11H8V9H1z" fill="#d5d8d9"/><path d="M11 4h6v11h-6z" fill="#bfc3c4"/></svg></span>
      </div>

      <!-- part wireframe, drawn on a free canvas -->
      <svg viewBox="0 0 1568 1110" preserveAspectRatio="none" shape-rendering="crispEdges" class="absolute left-[387px] top-[297px] w-[560px] h-[370px]" fill="none">
        <defs>
          <path id="ringA" d="M110 405C130 350 350 340 515 375"/>
          <path id="ringB" d="M100 480C130 435 340 430 500 465"/>
          <path id="ringC" d="M80 600C130 530 330 520 480 565"/>
          <path id="ringD" d="M1065 475C1250 500 1400 570 1500 680"/>
          <path id="ringE" d="M1045 565C1230 590 1400 650 1490 760"/>
          <path id="ringF" d="M1030 655C1200 680 1380 740 1480 790"/>
          <path id="brimA" d="M105 410C140 490 300 620 535 675"/>
          <path id="brimB" d="M85 575C120 640 270 720 520 770"/>
          <path id="brimC" d="M65 665C110 740 260 830 498 865"/>
          <path id="brimD" d="M1085 790C1200 830 1400 850 1510 700"/>
          <path id="brimE" d="M1070 880C1200 920 1400 920 1485 830"/>
          <path id="brimF" d="M1060 965C1200 1010 1400 1010 1465 915"/>
        </defs>
        <g stroke="#dcd2ab" stroke-width="3">
          <use href="#ringA"/><use href="#ringA" y="8"/><use href="#ringA" y="16"/><use href="#ringA" y="26"/>
          <use href="#ringB"/><use href="#ringB" y="8"/><use href="#ringB" y="16"/><use href="#ringB" y="26"/>
          <use href="#ringC"/><use href="#ringC" y="8"/><use href="#ringC" y="18"/>
          <use href="#ringD"/><use href="#ringD" y="8"/><use href="#ringD" y="16"/><use href="#ringD" y="26"/>
          <use href="#ringE"/><use href="#ringE" y="8"/><use href="#ringE" y="18"/>
          <use href="#ringF"/><use href="#ringF" y="8"/><use href="#ringF" y="18"/>
          <path d="M100 390C120 290 300 230 440 245L1180 385C1300 410 1460 470 1500 600"/>
          <path d="M130 360C170 290 300 260 430 265L1175 410C1300 440 1440 510 1480 640"/>
          <path d="M160 380C200 310 320 285 440 290L1170 420"/>
          <path d="M510 375L1065 470M515 395L1060 490M470 565L1030 655M480 585L1025 675"/>
          <path d="M535 665L815 705L1015 745M540 690L1015 765"/>
          <path d="M405 445C440 300 500 130 575 130C600 200 580 400 540 600"/>
          <path d="M370 635C420 380 500 180 565 130M590 130C610 200 590 420 535 640"/>
          <path d="M575 130L430 130C300 130 210 210 160 320C140 370 160 420 230 470"/>
          <path d="M590 130L1150 230M595 148L1140 245"/>
          <path d="M795 320C830 190 860 90 880 82M810 320C840 190 870 100 885 85M795 440L810 330"/>
          <path d="M1015 760C1060 500 1110 240 1150 230C1165 280 1150 500 1080 760M1040 760C1085 500 1130 250 1175 240C1190 300 1180 400 1100 760"/>
          <path d="M1180 380C1230 280 1280 220 1320 215M1180 400C1230 310 1280 290 1300 290C1315 340 1290 500 1200 720"/>
          <path d="M430 770L385 915M455 770L410 925M490 780L460 900M1180 830L1160 1000"/>
          <path d="M100 760C130 830 250 890 385 915M1080 1040C1200 1060 1340 1060 1420 1000M130 680C200 620 300 620 370 635M1410 840C1440 880 1440 920 1420 940"/>
          <path d="M1210 720C1300 700 1440 690 1500 640M1300 830C1350 860 1400 900 1420 935"/>
        </g>
        <g stroke="#fff" stroke-width="3">
          <path d="M420 55C560 50 760 65 880 82L1000 110C1150 150 1320 215 1420 290C1510 370 1560 500 1553 610C1540 680 1500 700 1430 720"/>
          <path d="M420 55C300 70 180 160 120 240C90 300 85 360 105 400"/>
          <path d="M427 55L432 170L445 400L458 590"/>
          <path d="M880 82L885 200L830 650L815 720M900 85L915 200L850 655M890 85L905 200L840 655M872 85L878 200L820 650"/>
          <path d="M460 590L830 650L1030 680L1200 705M535 665L815 715L1010 755L1090 775M540 680L815 725L1015 760"/>
          <use href="#brimA"/><use href="#brimA" y="8"/><use href="#brimA" y="16"/><use href="#brimA" y="24"/>
          <use href="#brimB"/><use href="#brimB" y="8"/><use href="#brimB" y="16"/><use href="#brimB" y="24"/>
          <use href="#brimC"/><use href="#brimC" y="8"/><use href="#brimC" y="16"/><use href="#brimC" y="24"/>
          <use href="#brimD"/><use href="#brimD" y="12"/><use href="#brimD" y="22"/>
          <use href="#brimE"/><use href="#brimE" y="10"/><use href="#brimE" y="22"/>
          <use href="#brimF"/><use href="#brimF" y="10"/><use href="#brimF" y="22"/>
          <path d="M70 755C130 840 280 910 483 942L390 925M65 665L70 755M95 440L85 510L78 530L100 520M85 575L60 618L75 622"/>
          <path d="M535 675L515 790L497 880L483 942M430 680L415 780L390 925"/>
          <path d="M1035 1040C1180 1075 1340 1080 1430 1020L1450 950M1035 1045C1180 1060 1330 1060 1420 1005"/>
          <path d="M1085 790L1060 960L1035 1045M1090 775L1045 980M1175 800L1125 1055M1195 720L1170 800"/>
          <path d="M1315 215C1345 260 1340 320 1330 350L1200 720"/>
        </g>
        <path d="M821 480L823 510" stroke="#ff2020" stroke-width="4"/>
        <ellipse cx="823" cy="511" rx="8" ry="8" fill="#f02828"/>
        <path d="M822 480L835 415" stroke="#20e020" stroke-width="4"/>
        <ellipse cx="835" cy="415" rx="7" ry="7" fill="#20e020"/>
        <path d="M820 478L755 468" stroke="#20e0e0" stroke-width="4"/>
        <ellipse cx="755" cy="468" rx="6" ry="5" fill="#20e0e0"/>
      </svg>
    </div>
  </div>

  <!-- status bar -->
  <div class="flex items-center h-[35px] shrink-0 pl-[6px] bg-[#f6fafb] border-t border-[#b8c4c8]">
    <span class="flex items-center justify-center w-[22px] h-[23px] bg-[#dcdfe0] border border-[#aaa]"><svg viewBox="0 0 18 18" class="w-[18px] h-[18px]"><path d="M1 1h16v5H1z" fill="#fff" stroke="#999"/><path d="M1 6h5v11H1z" fill="#7cc7ea" stroke="#1b5d80"/><path d="M8 14c2-3 7-3 9 0-2 3-7 3-9 0z" fill="#333"/></svg></span>
    <svg viewBox="0 0 16 16" class="w-[16px] h-[16px] ml-[7px]"><circle cx="8" cy="8" r="6.500" fill="#2b93c4" stroke="#1b5d80"/><path d="M2 14C5 13 12 7 15 1" stroke="#fff" stroke-width="1.500" fill="none"/></svg>
    <span class="w-[16px] h-[16px] ml-[10px] bg-linear-to-br from-white to-[#cfd5d8] border border-[#1d7fa8]"></span>
    <span class="w-px h-[24px] ml-[12px] bg-[#a9aeb0]"></span>
    <span class="w-[5px] h-[5px] ml-[6px] rounded-full bg-[#1b6d94]"></span>
    <span class="ml-[8px] text-[11px] text-[#666]">隐藏线将显示为灰色。</span>
    <div class="ml-auto flex items-center mr-[18px]">
      <span class="w-px h-[24px] bg-[#c3c6c7]"></span>
      <span class="w-px h-[24px] ml-[3px] bg-[#c3c6c7]"></span>
      <div class="flex items-center w-[44px] h-[24px] ml-[3px] border border-[#c3c6c7]">
        <svg viewBox="0 0 16 14" class="w-[17px] h-[14px] ml-[5px]"><path d="M1 12l1-8 1-3h3v11H2zM15 12l-1-8-1-3h-3v11h4z" fill="#555"/><path d="M6 5h4v3H6z" fill="#999"/></svg>
        <span class="w-px h-full ml-[4px] bg-[#c3c6c7]"></span>
        <span class="ml-[3px] w-0 h-0 border-x-[4px] border-x-transparent border-t-[4px] border-t-[#777]"></span>
      </div>
      <div class="flex items-center justify-between w-[177px] h-[24px] ml-[98px] pl-[7px] pr-[5px] border border-[#c3c6c7]">
        <span class="text-[#444]">几何</span>
        <span class="w-0 h-0 border-x-[4px] border-x-transparent border-t-[4px] border-t-[#777]"></span>
      </div>
    </div>
    <svg viewBox="0 0 10 10" class="absolute right-[3px] bottom-[3px] w-[10px] h-[10px]"><path d="M9 1L1 9M9 4L4 9M9 7L7 9" stroke="#c3c6c7"/></svg>
  </div>

  <!-- forum watermark -->
  <div class="absolute left-[1731px] top-[966px] w-[170px] h-[70px]">
    <span class="absolute left-0 top-[2px] text-[34px] leading-[40px] text-[#ff6a3a] font-light">野</span>
    <span class="absolute left-[42px] top-[2px] text-[34px] leading-[40px] text-[#ff6a3a] font-light">火</span>
    <svg viewBox="0 0 20 40" class="absolute left-[62px] -top-[10px] w-[20px] h-[40px]"><path d="M3 0C12 5 19 15 15 26 13 32 8 36 2 38 7 30 9 16 3 0z" fill="#ff6a3a"/></svg>
    <span class="absolute left-[88px] top-0 text-[38px] leading-[44px] text-black font-light whitespace-nowrap">论坛</span>
    <span class="absolute left-[4px] top-[47px] text-[17px] leading-5 italic tracking-[1.1px] text-[#777] font-['Liberation_Sans'] whitespace-nowrap">www.proewildfire.cn</span>
  </div>
</div>
</body>
</html>
